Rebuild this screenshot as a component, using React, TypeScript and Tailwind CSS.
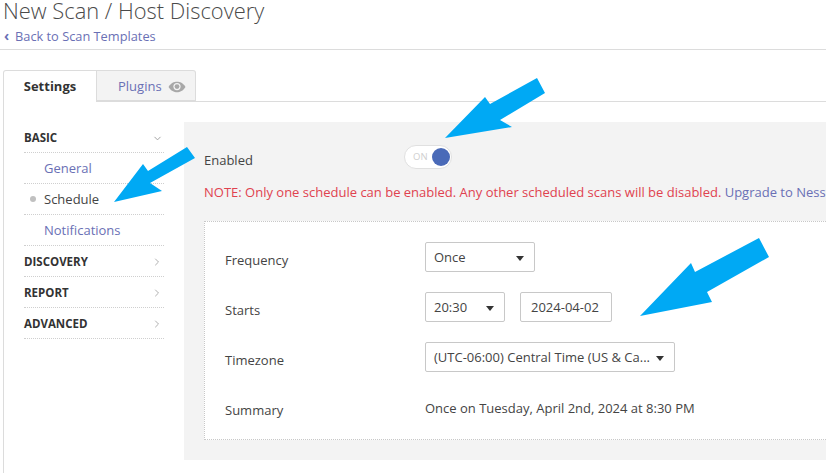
import React from "react";
import { ChevronDown, ChevronRight } from "lucide-react";

const link = "text-[#6a70b5]";

function Arrow({ points, className }: { points: string; className: string }) {
  return (
    <svg className={className} width="826" height="473" viewBox="0 0 826 473">
      <polygon points={points} fill="#00a9f4" />
    </svg>
  );
}

function Caret() {
  return <span className="w-0 h-0 border-x-[4.5px] border-x-transparent border-t-[5px] border-t-[#333]" />;
}

function NavHead({ label, open }: { label: string; open?: boolean }) {
  return (
    <div className="h-[31px] flex items-center justify-between border-b border-dotted border-[#cfcfcf] pt-[2px] pr-[1px]">
      <span className="text-[11.5px] font-bold text-[#333]">{label}</span>
      {open ? (
        <ChevronDown size={11} className="text-[#9a9a9a]" />
      ) : (
        <ChevronRight size={12} className="text-[#b0b0b0]" />
      )}
    </div>
  );
}

function NavItem({ label, active }: { label: string; active?: boolean }) {
  return (
    <div className="h-[31px] flex items-center border-b border-dotted border-[#cfcfcf] pt-[2px] pl-[20px] relative">
      {active && <span className="absolute left-[6px] top-[12px] w-[6px] h-[6px] rounded-full bg-[#c0c0c0]" />}
      <span className={`text-[13px] ${active ? "text-[#444]" : link}`}>{label}</span>
    </div>
  );
}

function Field({ label, children, className }: { label: string; children: React.ReactNode; className: string }) {
  return (
    <div className={`flex items-center ${className}`}>
      <span className="w-[200px] mt-[8px] text-[13px] text-[#444] shrink-0">{label}</span>
      {children}
    </div>
  );
}

function Select({ label, className }: { label: string; className: string }) {
  return (
    <div className={`h-[30px] border border-[#c8c8c8] rounded-[2px] bg-white flex items-center justify-between pt-[2px] pl-[8px] pr-[10px] ${className}`}>
      <span className="text-[13px] text-[#444] whitespace-nowrap">{label}</span>
      <Caret />
    </div>
  );
}

export default function App() {
  return (
    <div className="relative w-[826px] h-[473px] overflow-hidden bg-white font-['Open_Sans',sans-serif]">
      <div className="h-[53px] border-b border-[#dcdcdc] pl-[3px] -mt-[3px]">
        <div className="text-[21.9px] font-light text-[#4a4a4a] leading-[26px] pt-[1px] whitespace-nowrap">New Scan / Host Discovery</div>
        <div className={`text-[12.8px] leading-[18px] mt-[3px] flex items-center ${link}`}>
          <span className="text-[14px] font-bold w-[12px] leading-[14px] pl-[1px]">‹</span>
          <span>Back to Scan Templates</span>
        </div>
      </div>

      <div className="pl-[3px] pt-[20px]">
        <div className="flex h-[32px] border-b border-[#dcdcdc]">
          <div className="w-[94px] h-[32px] border border-b-0 border-[#dcdcdc] rounded-tl-[3px] bg-white flex items-center justify-center text-[13px] font-bold text-[#333]">
            Settings
          </div>
          <div className="w-[99px] h-[31px] border border-l-0 border-[#dcdcdc] rounded-tr-[3px] bg-[#f3f3f3] flex items-center pl-[21px] pt-[2px] gap-[6px]">
            <span className={`text-[13px] ${link}`}>Plugins</span>
            <svg width="18" height="12" viewBox="0 0 18 12">
              <path d="M0.5 6C3 2 6 0.8 9 0.8S15 2 17.5 6C15 10 12 11.2 9 11.2S3 10 0.5 6Z" fill="#a8a8a8" />
              <circle cx="9" cy="5.6" r="3.6" fill="#f3f3f3" />
              <circle cx="9" cy="5.6" r="2.4" fill="#a8a8a8" />
            </svg>
          </div>
        </div>

        <div className="flex h-[371px] border-l border-[#dcdcdc] pl-[20px] pt-[20px]">
          <div className="w-[140px] shrink-0">
            <NavHead label="BASIC" open />
            <NavItem label="General" />
            <NavItem label="Schedule" active />
            <NavItem label="Notifications" />
            <NavHead label="DISCOVERY" />
            <NavHead label="REPORT" />
            <NavHead label="ADVANCED" />
          </div>
          <div className="ml-[20px] flex-1 min-w-0 h-[338px] bg-[#f3f3f3] pl-[20px] overflow-hidden">
            <div className="flex items-center h-[30px] mt-[20px]">
              <span className="w-[200px] mt-[8px] text-[13px] text-[#444]">Enabled</span>
              <div className="w-[48px] h-[24px] rounded-full border border-[#e0e0e0] bg-white flex items-center justify-between pl-[8px] pr-[1.5px]">
                <span className="text-[9.5px] text-[#cfcfcf]">ON</span>
                <span className="w-[18px] h-[18px] rounded-full bg-[#4a6ab8]" />
              </div>
            </div>
            <div className="text-[13px] leading-[18px] mt-[11px] whitespace-nowrap text-[#e0424f]">
              NOTE: Only one schedule can be enabled. Any other scheduled scans will be disabled. <span className={link}>Upgrade to Nessus Professional</span>
            </div>
            <div className="mt-[20px] h-[219px] w-[700px] bg-white border border-dotted border-[#c8c8c8] pl-[20px] pt-[20px]">
              <Field label="Frequency" className="h-[30px]">
                <Select label="Once" className="w-[110px]" />
              </Field>
              <Field label="Starts" className="h-[30px] mt-[20px]">
                <Select label="20:30" className="w-[80px]" />
                <div className="ml-[15px] w-[92px] h-[30px] border border-[#c8c8c8] rounded-[2px] flex items-center pt-[2px] pl-[10px] text-[13px] text-[#444]">2024-04-02</div>
              </Field>
              <Field label="Timezone" className="h-[30px] mt-[20px]">
                <Select label="(UTC-06:00) Central Time (US & Ca..." className="w-[250px]" />
              </Field>
              <Field label="Summary" className="h-[30px] mt-[20px]">
                <span className="text-[13px] text-[#444] mt-[3px]">Once on Tuesday, April 2nd, 2024 at 8:30 PM</span>
              </Field>
            </div>
          </div>
        </div>
      </div>

      <Arrow className="absolute left-0 top-0" points="537,78 545,93 500,120 512,127 445,138 485,97 490,104" />
      <Arrow className="absolute left-0 top-0" points="187,147 195,158 150,183 162,191 114,202 143,164 148,171" />
      <Arrow className="absolute left-0 top-0" points="759,238 769,257 707,292 712,302 640,316 691,263 695,272" />
    </div>
  );
}
